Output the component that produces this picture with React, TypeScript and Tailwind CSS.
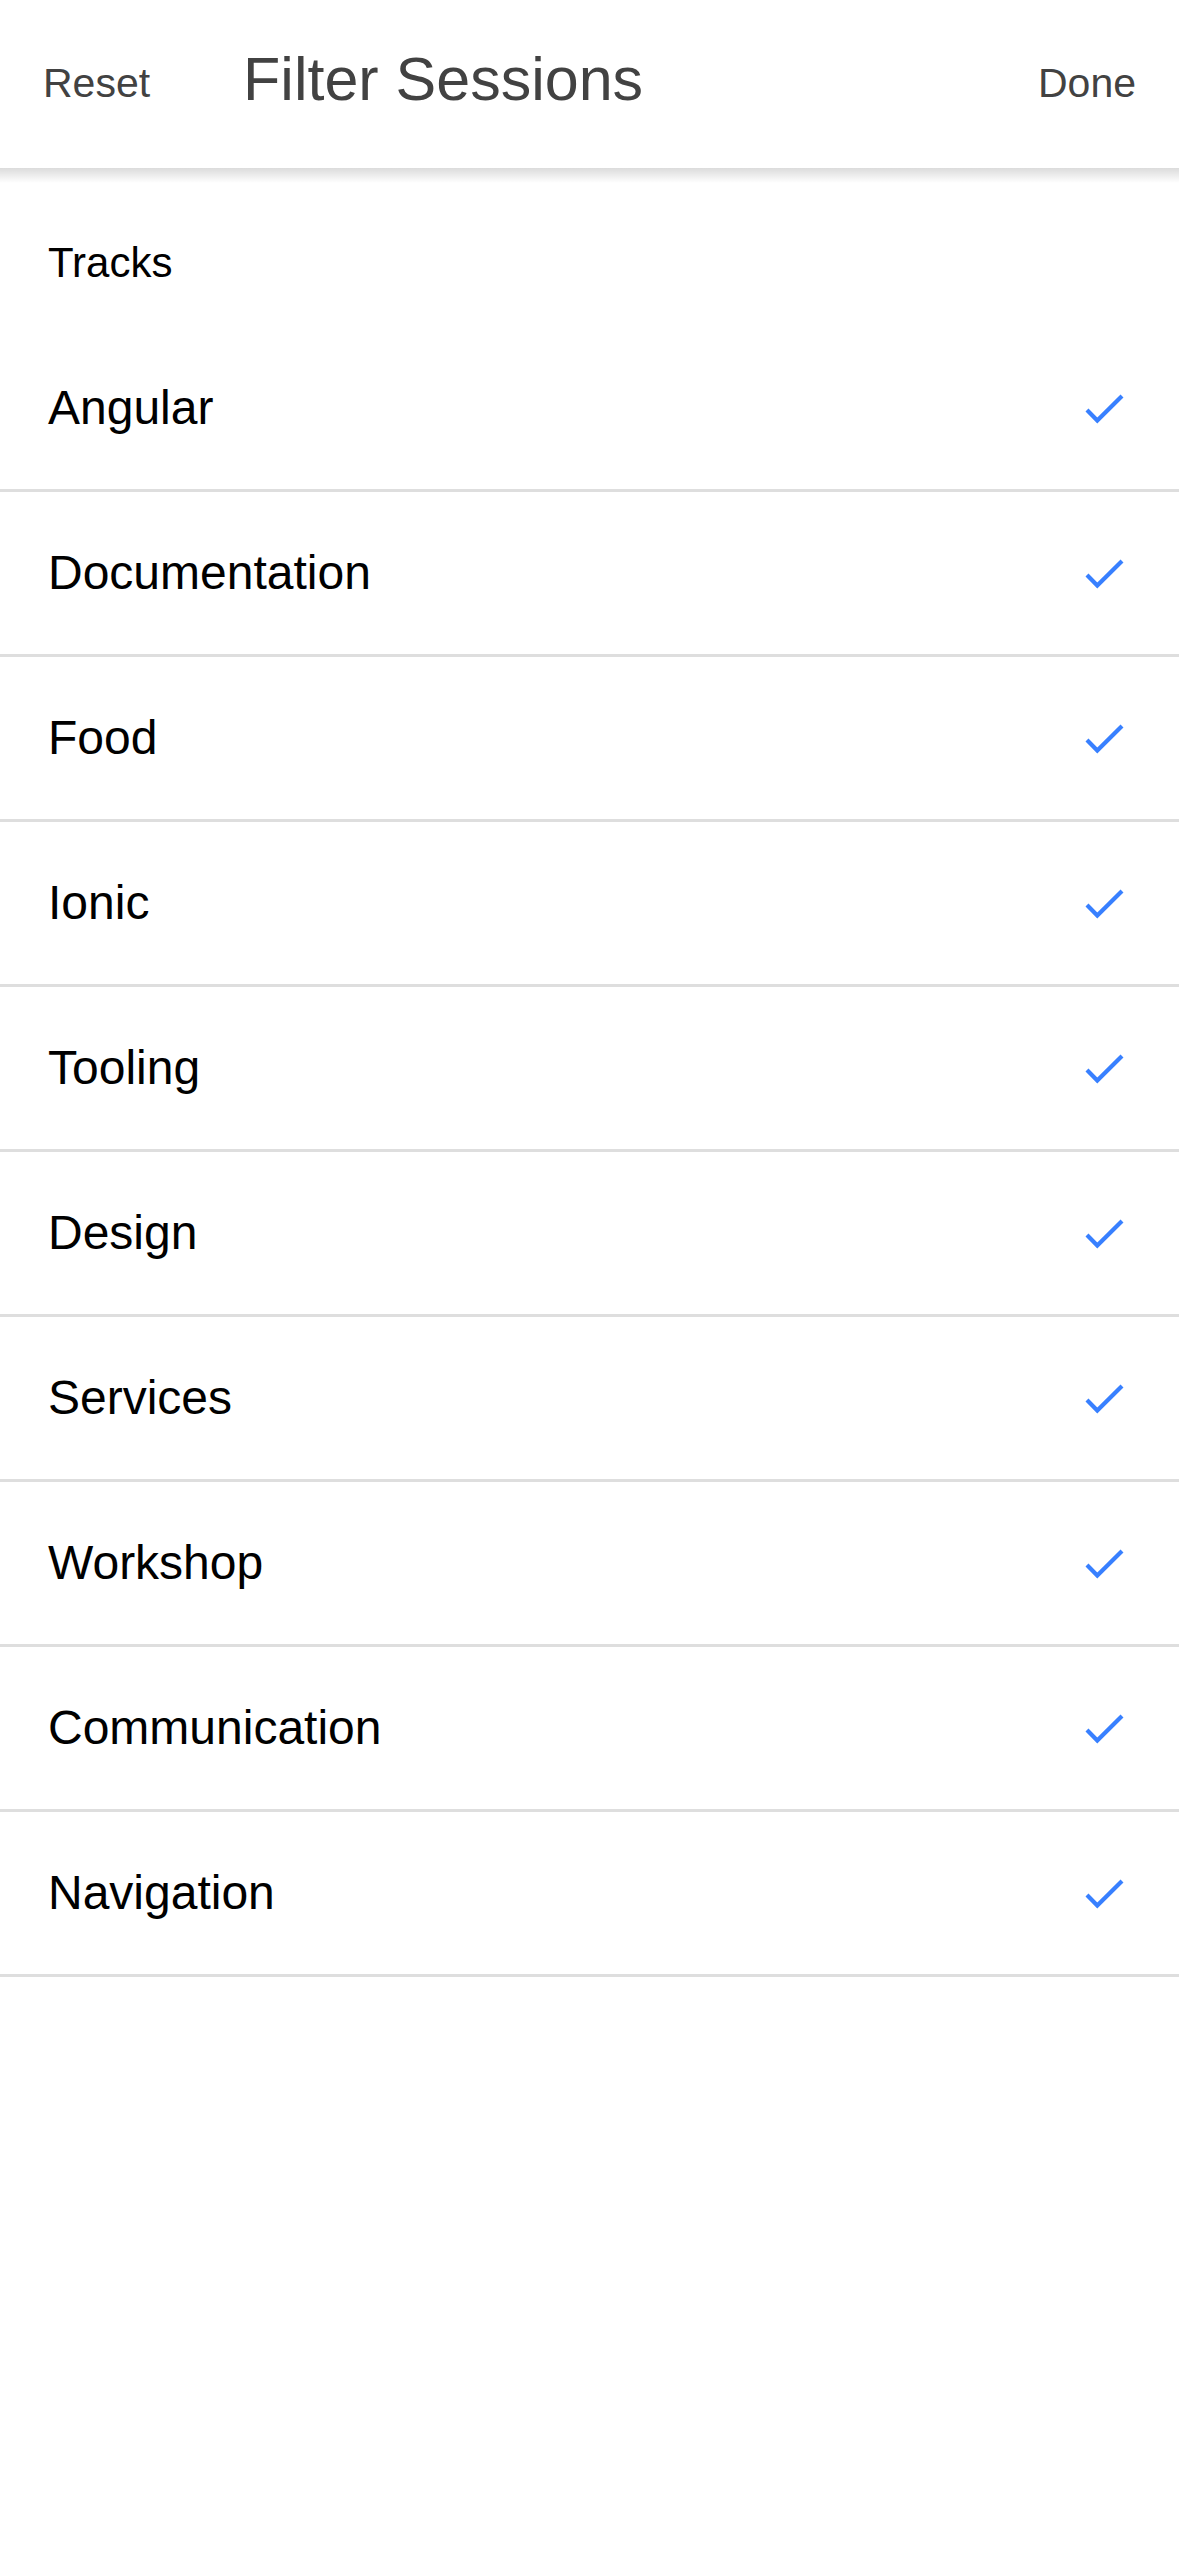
import React from "react";

const tracks = [
  "Angular",
  "Documentation",
  "Food",
  "Ionic",
  "Tooling",
  "Design",
  "Services",
  "Workshop",
  "Communication",
  "Navigation",
];

function Check() {
  return (
    <svg width="48" height="48" viewBox="0 0 48 48" fill="none">
      <polyline
        points="7,26 17.3,36.5 42,12"
        stroke="#3880ff"
        strokeWidth="4.2"
        strokeLinecap="butt"
        strokeLinejoin="miter"
      />
    </svg>
  );
}

export default function App() {
  return (
    <div
      className="min-h-[2553px] w-full bg-white"
      style={{ fontFamily: '"Liberation Sans", Arial, sans-serif' }}
    >
      <header className="relative z-10 flex h-[168px] items-center bg-white">
        <span className="pl-[43px] text-[41px] text-[#424242]">Reset</span>
        <span className="mb-[8px] ml-[93px] flex-1 text-[61px] text-[#424242]">
          Filter Sessions
        </span>
        <span className="pr-[43px] text-[41px] text-[#424242]">Done</span>
      </header>
      <div className="h-[15px] bg-gradient-to-b from-[rgba(0,0,0,0.14)] to-[rgba(0,0,0,0)]" />
      <div className="pt-[9px]">
        <div className="flex h-[135px] items-center pl-[48px] pt-[5px] text-[42px] text-black">
          Tracks
        </div>
        {tracks.map((t) => (
          <div
            key={t}
            className="flex h-[165px] items-center justify-between border-b-[3px] border-[#dedede] pl-[48px] pr-[51px]"
          >
            <span className="text-[48px] text-black">{t}</span>
            <Check />
          </div>
        ))}
      </div>
    </div>
  );
}
